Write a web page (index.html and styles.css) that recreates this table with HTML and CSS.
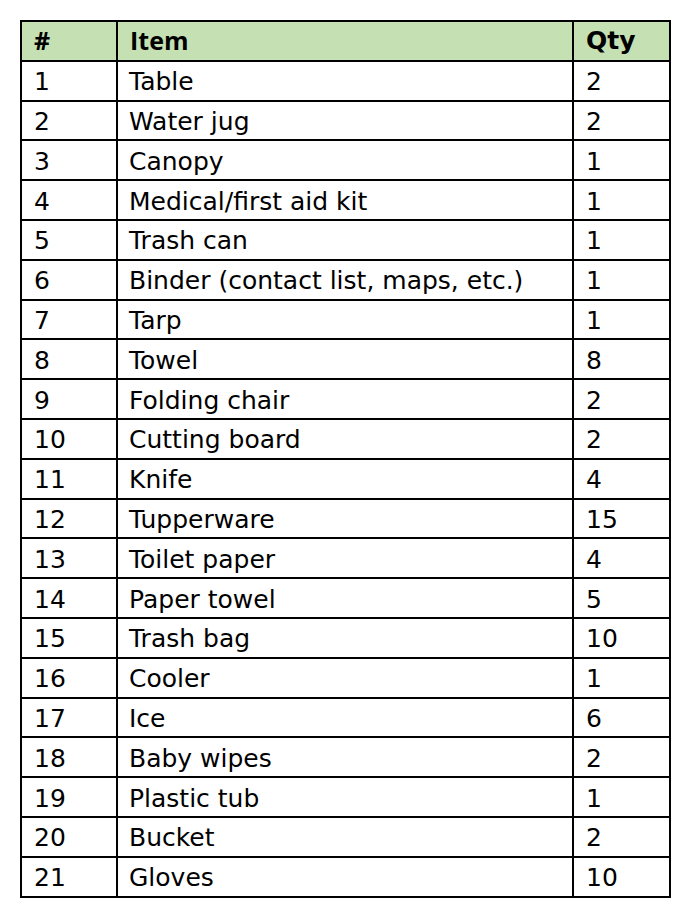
FILE: index.html
```html
<!DOCTYPE html>
<html>
<head>
<meta charset="utf-8">
<link rel="stylesheet" href="styles.css">
</head>
<body>
<table class="list">
  <colgroup><col class="c-num"><col class="c-item"><col class="c-qty"></colgroup>
  <thead>
    <tr><th>#</th><th>Item</th><th class="qty">Qty</th></tr>
  </thead>
  <tbody>
    <tr><td>1</td><td>Table</td><td class="qty">2</td></tr>
    <tr><td>2</td><td>Water jug</td><td class="qty">2</td></tr>
    <tr><td>3</td><td>Canopy</td><td class="qty">1</td></tr>
    <tr><td>4</td><td>Medical/first aid kit</td><td class="qty">1</td></tr>
    <tr><td>5</td><td>Trash can</td><td class="qty">1</td></tr>
    <tr><td>6</td><td>Binder (contact list, maps, etc.)</td><td class="qty">1</td></tr>
    <tr><td>7</td><td>Tarp</td><td class="qty">1</td></tr>
    <tr><td>8</td><td>Towel</td><td class="qty">8</td></tr>
    <tr><td>9</td><td>Folding chair</td><td class="qty">2</td></tr>
    <tr><td>10</td><td>Cutting board</td><td class="qty">2</td></tr>
    <tr><td>11</td><td>Knife</td><td class="qty">4</td></tr>
    <tr><td>12</td><td>Tupperware</td><td class="qty">15</td></tr>
    <tr><td>13</td><td>Toilet paper</td><td class="qty">4</td></tr>
    <tr><td>14</td><td>Paper towel</td><td class="qty">5</td></tr>
    <tr><td>15</td><td>Trash bag</td><td class="qty">10</td></tr>
    <tr><td>16</td><td>Cooler</td><td class="qty">1</td></tr>
    <tr><td>17</td><td>Ice</td><td class="qty">6</td></tr>
    <tr><td>18</td><td>Baby wipes</td><td class="qty">2</td></tr>
    <tr><td>19</td><td>Plastic tub</td><td class="qty">1</td></tr>
    <tr><td>20</td><td>Bucket</td><td class="qty">2</td></tr>
    <tr><td>21</td><td>Gloves</td><td class="qty">10</td></tr>
  </tbody>
</table>
</body>
</html>
```
FILE: styles.css
```css
html, body {
  margin: 0;
  padding: 0;
  background: #ffffff;
}
body {
  padding: 20px 0 0 20px;
}
.list {
  border-collapse: collapse;
  table-layout: fixed;
  width: 650px;
  font-family: "DejaVu Sans", "Noto Sans", sans-serif;
  font-size: 25px;
  color: #000;
}
.c-num { width: 96px; }
.c-item { width: 456px; }
.c-qty { width: 97px; }
.list th, .list td {
  border: 2px solid #000;
  height: 37.8px;
  padding: 2px 0 0 12px;
  text-align: left;
  vertical-align: middle;
  line-height: 1;
  box-sizing: border-box;
}
.list tr { height: 39.8px; }
.list th {
  background: #c5e0b3;
  font-family: "Open Sans", "DejaVu Sans", sans-serif;
  font-weight: 700;
  padding-top: 0;
}
.list td:nth-child(2) {
  padding-left: 11px;
}
.list .qty {
  font-family: "DejaVu Sans", "Liberation Sans", sans-serif;
  font-size: 25px;
  padding-left: 12px;
}
.list th.qty {
  font-weight: 700;
}
```
